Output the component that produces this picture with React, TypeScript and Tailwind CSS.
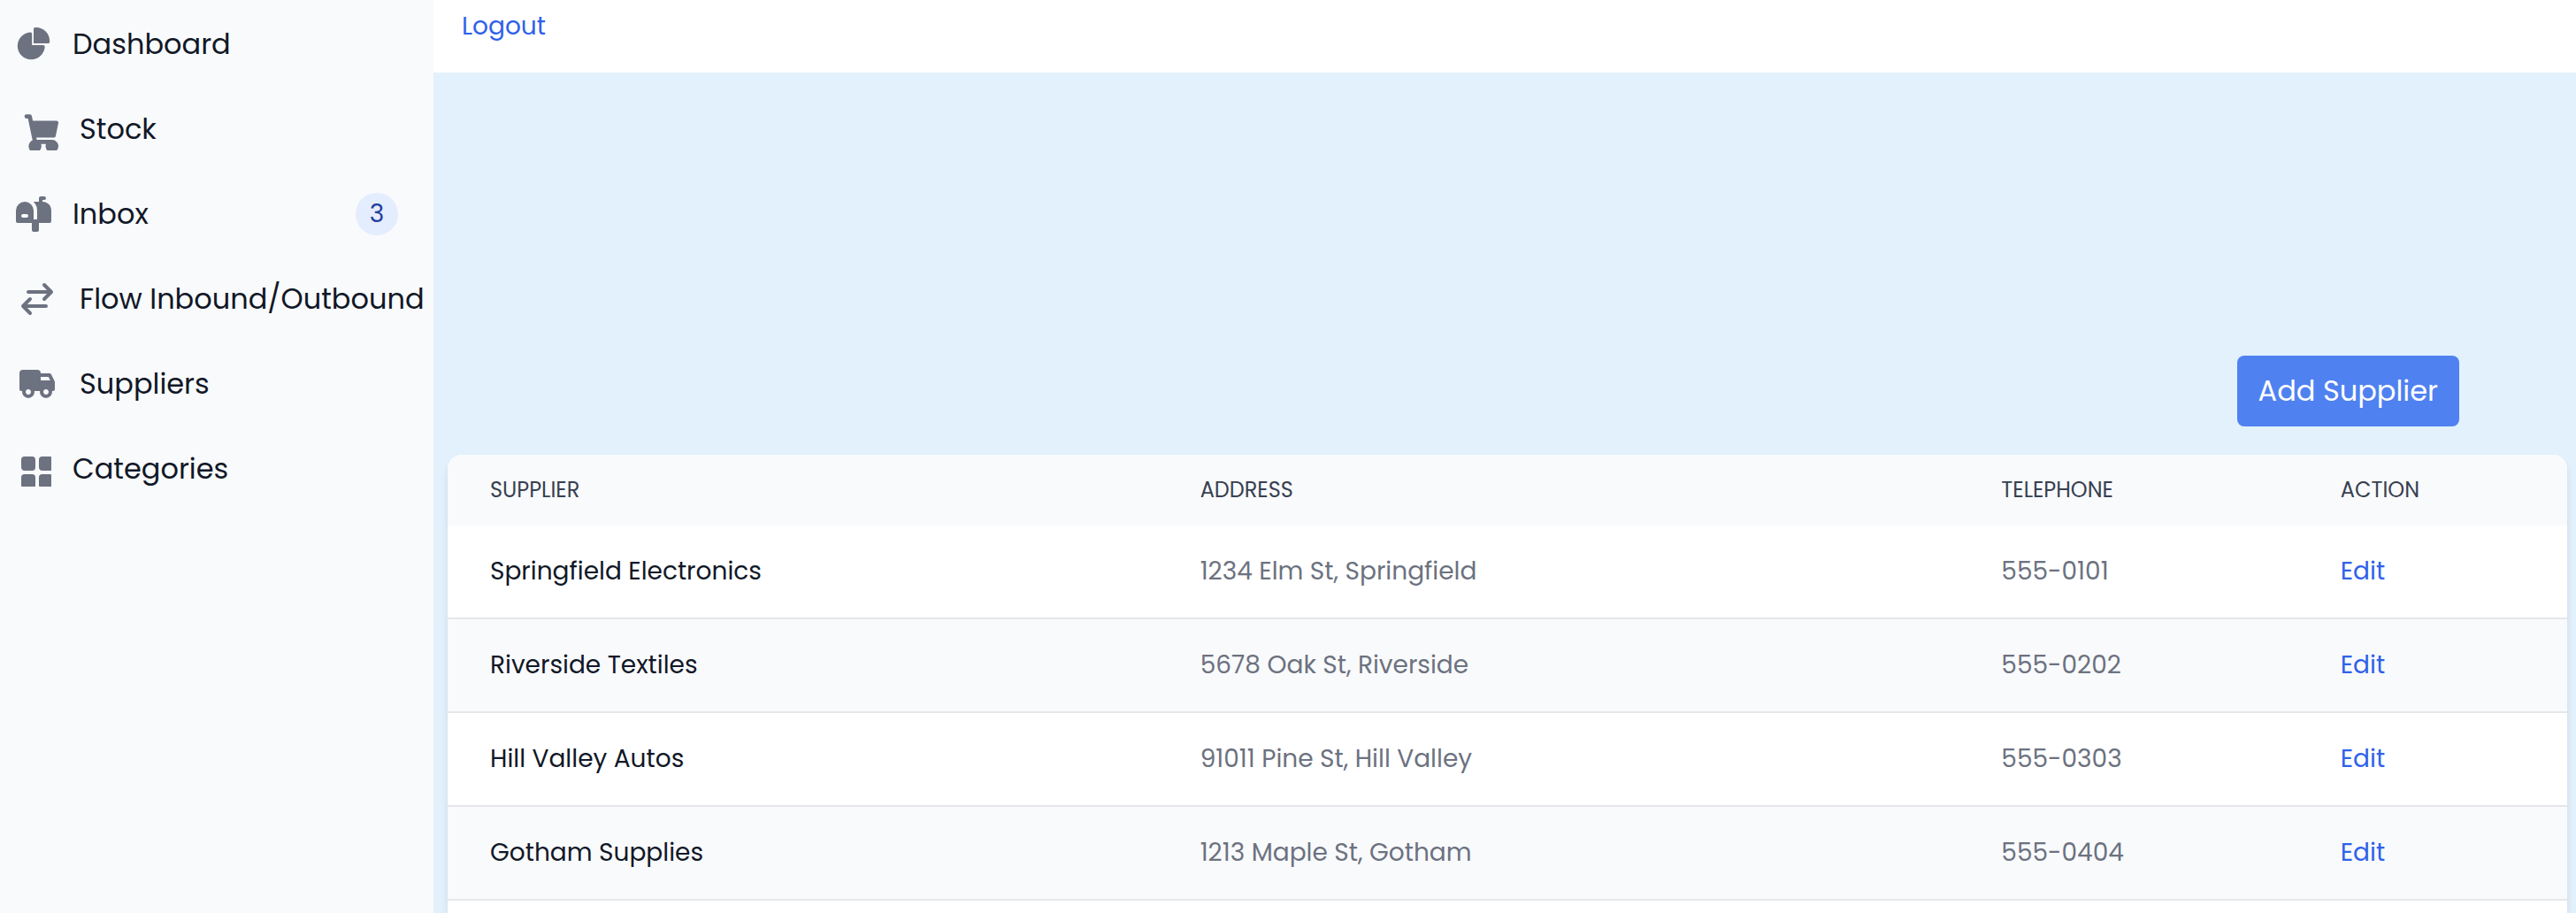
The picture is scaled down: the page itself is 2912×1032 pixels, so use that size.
import type { ReactNode } from "react";

type NavItem = {
  label: string;
  icon: ReactNode;
  badge?: string;
};

const navItems: NavItem[] = [
  {
    label: "Dashboard",
    icon: (
      <svg aria-hidden="true" className="size-10 shrink-0" viewBox="0 0 22 21" fill="currentColor">
        <path d="M16.975 11H10V4.025a1 1 0 0 0-1.066-.998 8.5 8.5 0 1 0 9.039 9.039.999.999 0 0 0-1-1.066h.002Z" />
        <path d="M12.5 0c-.157 0-.311.01-.565.027A1 1 0 0 0 11 1.02V10h8.975a1 1 0 0 0 1-.935c.013-.188.028-.374.028-.565A8.51 8.51 0 0 0 12.5 0Z" />
      </svg>
    ),
  },
  {
    label: "Stock",
    icon: (
      <svg aria-hidden="true" className="size-12 shrink-0" viewBox="0 0 20 20" fill="currentColor">
        <path
          fillRule="evenodd"
          d="M4 4a1 1 0 0 1 1-1h1.5a1 1 0 0 1 .979.796L7.939 6H19a1 1 0 0 1 .979 1.204l-1.25 6a1 1 0 0 1-.979.796H9.605l.208 1H17a3 3 0 1 1-2.83 2h-2.34a3 3 0 1 1-4.009-1.76L5.686 5H5a1 1 0 0 1-1-1Z"
        />
      </svg>
    ),
  },
  {
    label: "Inbox",
    badge: "3",
    icon: (
      <svg aria-hidden="true" className="size-10 shrink-0" viewBox="0 0 20 20" fill="currentColor">
        <path d="m17.418 3.623-.018-.008a6.713 6.713 0 0 0-2.4-.569V2h1a1 1 0 1 0 0-2h-2a1 1 0 0 0-1 1v2H9.89A6.977 6.977 0 0 1 12 8v5h-2V8A5 5 0 1 0 0 8v6a1 1 0 0 0 1 1h8v4a1 1 0 0 0 1 1h2a1 1 0 0 0 1-1v-4h6a1 1 0 0 0 1-1V8a5 5 0 0 0-2.582-4.377ZM6 12H4a1 1 0 0 1 0-2h2a1 1 0 0 1 0 2Z" />
      </svg>
    ),
  },
  {
    label: "Flow Inbound/Outbound",
    icon: (
      <svg
        aria-hidden="true"
        className="size-12 shrink-0"
        viewBox="0 0 24 24"
        fill="none"
        stroke="currentColor"
        strokeWidth="2"
        strokeLinecap="round"
        strokeLinejoin="round"
      >
        <path d="M7 8h13m0 0-4-4m4 4-4 4M17 16H4m0 0 4 4m-4-4 4-4" />
      </svg>
    ),
  },
  {
    label: "Suppliers",
    icon: (
      <svg aria-hidden="true" className="size-12 shrink-0" viewBox="0 0 24 24" fill="currentColor">
        <path
          fillRule="evenodd"
          d="M4 4a2 2 0 0 0-2 2v9a1 1 0 0 0 1 1h.535a3.5 3.5 0 1 0 6.93 0h3.07a3.5 3.5 0 1 0 6.93 0H21a1 1 0 0 0 1-1v-4a.999.999 0 0 0-.106-.447l-2-4A1 1 0 0 0 19 6h-5a2 2 0 0 0-2-2H4Zm14.192 11.59.016.02a1.5 1.5 0 1 1-.016-.021Zm-10 0 .016.02a1.5 1.5 0 1 1-.016-.021Zm5.806-5.572v-2.02h4.396l1 2.02h-5.396Z"
        />
      </svg>
    ),
  },
  {
    label: "Categories",
    icon: (
      <svg aria-hidden="true" className="size-10 shrink-0" viewBox="0 0 20 20" fill="currentColor">
        <path d="M4.857 3A1.857 1.857 0 0 0 3 4.857v4.286C3 10.169 3.831 11 4.857 11h4.286A1.857 1.857 0 0 0 11 9.143V4.857A1.857 1.857 0 0 0 9.143 3H4.857Zm10 0A1.857 1.857 0 0 0 13 4.857v4.286c0 1.026.831 1.857 1.857 1.857h4.286A1.857 1.857 0 0 0 21 9.143V4.857A1.857 1.857 0 0 0 19.143 3h-4.286Zm-10 10A1.857 1.857 0 0 0 3 14.857v4.286C3 20.169 3.831 21 4.857 21h4.286A1.857 1.857 0 0 0 11 19.143v-4.286A1.857 1.857 0 0 0 9.143 13H4.857Zm10 0A1.857 1.857 0 0 0 13 14.857v4.286c0 1.026.831 1.857 1.857 1.857h4.286A1.857 1.857 0 0 0 21 19.143v-4.286A1.857 1.857 0 0 0 19.143 13h-4.286Z" />
      </svg>
    ),
  },
];

const suppliers = [
  { name: "Springfield Electronics", address: "1234 Elm St, Springfield", phone: "555-0101" },
  { name: "Riverside Textiles", address: "5678 Oak St, Riverside", phone: "555-0202" },
  { name: "Hill Valley Autos", address: "91011 Pine St, Hill Valley", phone: "555-0303" },
  { name: "Gotham Supplies", address: "1213 Maple St, Gotham", phone: "555-0404" },
];

function Sidebar() {
  return (
    <aside className="w-[490px] shrink-0 bg-[#f9fafc]">
      <nav aria-label="Main">
        <ul className="flex flex-col pt-0.5">
          {navItems.map((item) => (
            <li key={item.label}>
              <a href="#" className="flex h-24 items-center pr-10 pl-[18px] text-[#6c7280]">
                {item.icon}
                <span className="ml-6 flex-1 text-[32px] leading-12 whitespace-nowrap text-[#111827]">
                  {item.label}
                </span>
                {item.badge && (
                  <span className="flex size-12 items-center justify-center rounded-full bg-[#e4edfd] text-[28px] text-[#24409e]">
                    {item.badge}
                  </span>
                )}
              </a>
            </li>
          ))}
        </ul>
      </nav>
    </aside>
  );
}

function SupplierTable() {
  return (
    <div className="min-h-0 flex-1 rounded-t-2xl bg-white shadow-[0_8px_12px_-2px_rgb(0_0_0/0.1),0_4px_8px_-4px_rgb(0_0_0/0.1)]">
      <table className="w-full table-fixed text-left text-[28px] leading-10 text-[#6c7280]">
        <colgroup>
          <col className="w-[33.5%]" />
          <col className="w-[37.8%]" />
          <col className="w-[16%]" />
          <col />
        </colgroup>
        <thead className="text-2xl leading-8 text-[#374151] uppercase">
          <tr className="bg-[#f9fafc]">
            <th scope="col" className="rounded-tl-2xl px-12 py-6 font-normal">Supplier</th>
            <th scope="col" className="px-12 py-6 font-normal">Address</th>
            <th scope="col" className="px-12 py-6 font-normal">Telephone</th>
            <th scope="col" className="rounded-tr-2xl px-12 py-6 font-normal">Action</th>
          </tr>
        </thead>
        <tbody>
          {suppliers.map((s) => (
            <tr key={s.name} className="border-b-2 border-[#e5e7eb] odd:bg-white even:bg-[#f9fafc]">
              <th scope="row" className="px-12 py-8 font-normal whitespace-nowrap text-[#111827]">
                {s.name}
              </th>
              <td className="px-12 py-8">{s.address}</td>
              <td className="px-12 py-8">{s.phone}</td>
              <td className="px-12 py-8">
                <a href="#" className="text-[#2f62e9] hover:underline">Edit</a>
              </td>
            </tr>
          ))}
        </tbody>
      </table>
    </div>
  );
}

export default function App() {
  return (
    <div className="flex h-screen overflow-hidden bg-white font-['Poppins','Inter',sans-serif]">
      <Sidebar />
      <div className="flex min-w-0 flex-1 flex-col">
        <header className="flex h-[82px] shrink-0 items-start px-8 pt-2.5">
          <a href="#" className="text-[28px] leading-10 text-[#2f62e9] hover:underline">Logout</a>
        </header>
        <main className="flex min-h-0 flex-1 flex-col bg-[#e2f1fc] pt-80 pr-2.5 pl-4">
          <div className="mb-8 flex justify-end pr-[122px]">
            <button
              type="button"
              className="rounded-lg bg-[#4f81f0] px-6 py-4 text-[32px] leading-12 text-white"
            >
              Add Supplier
            </button>
          </div>
          <SupplierTable />
        </main>
      </div>
    </div>
  );
}
